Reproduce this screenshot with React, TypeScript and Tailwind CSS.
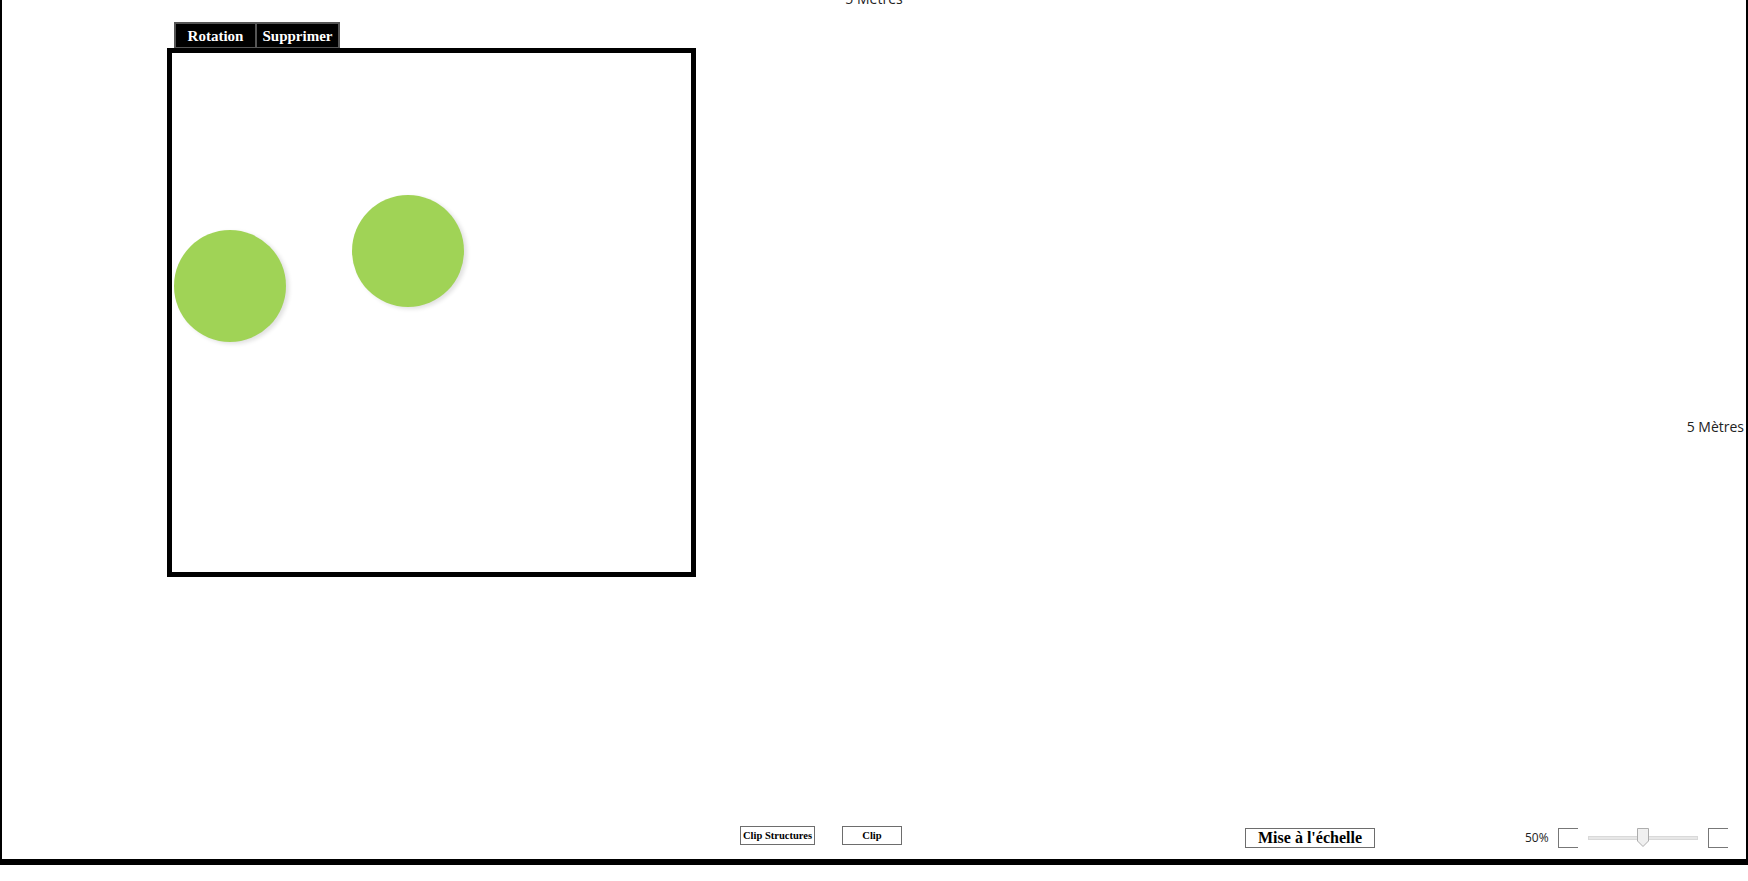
import React from "react";

const serif = { fontFamily: '"Liberation Serif", "Times New Roman", serif' };
const sans = { fontFamily: '"Open Sans", "Noto Sans", sans-serif' };

function Circle({ className }: { className: string }) {
  return (
    <div className={`absolute w-[116px] h-[116px] ${className}`}>
      <div className="w-[112px] h-[112px] rounded-full bg-[#a0d356] shadow-[3px_2px_4px_rgba(0,0,0,0.12)]" />
    </div>
  );
}

export default function App() {
  return (
    <div className="w-[1748px] h-[881px] bg-white overflow-hidden">
      <div className="relative w-[1748px] h-[865px] border-l-2 border-r-2 border-b-[6px] border-black flex flex-col">
        <div
          className="absolute left-1/2 -translate-x-1/2 top-[-11px] text-[14px] leading-[19px] text-[#222] whitespace-nowrap"
          style={sans}
        >
          5 Mètres
        </div>

        <div className="flex flex-row items-start flex-1">
          <div className="flex flex-col pl-[165px] pt-[22px]">
            <div className="flex flex-row ml-[7px]" style={serif}>
              <div className="w-[83px] h-[27px] bg-black border-2 border-[#555] text-white font-bold text-[15px] flex items-center justify-center pt-[2px]">
                Rotation
              </div>
              <div className="w-[83px] h-[27px] bg-black border-2 border-l-0 border-[#555] text-white font-bold text-[15px] flex items-center justify-center pt-[2px]">
                Supprimer
              </div>
            </div>
            <div className="relative -mt-px w-[529px] h-[529px] border-[5px] border-black bg-white">
              <Circle className="left-[2px] top-[177px]" />
              <Circle className="left-[180px] top-[142px]" />
            </div>
          </div>
          <div
            className="ml-auto mt-[417px] mr-[2px] text-[14px] leading-[19px] text-[#222] whitespace-nowrap"
            style={sans}
          >
            5 Mètres
          </div>
        </div>

        <div className="h-[40px] flex flex-row items-start">
          <div
            className="ml-[738px] mt-[7px] w-[75px] h-[19px] border border-[#6d6d6d] flex items-center justify-center font-bold text-[10.5px] text-black whitespace-nowrap"
            style={serif}
          >
            Clip Structures
          </div>
          <div
            className="ml-[27px] mt-[7px] w-[60px] h-[19px] border border-[#6d6d6d] flex items-center justify-center font-bold text-[10.5px] text-black"
            style={serif}
          >
            Clip
          </div>
          <div
            className="ml-[343px] mt-[9px] w-[130px] h-[20px] border border-[#6d6d6d] flex items-center justify-center font-bold text-[16px] text-black whitespace-nowrap"
            style={serif}
          >
            Mise à l'échelle
          </div>
          <div
            className="ml-[150px] mt-[10px] w-[23px] text-[12px] leading-[17px] text-[#222]"
            style={sans}
          >
            50%
          </div>
          <div className="ml-[10px] mt-[9px] w-[20px] h-[20px] border-l border-t border-b border-[#777]" />
          <div className="ml-[10px] mt-[9px] w-[110px] h-[20px] relative flex items-center">
            <div className="w-full h-[4px] bg-[#e7e7e7] border border-[#d9d9d9]" />
            <svg
              className="absolute left-[49px] top-0"
              width="12"
              height="19"
              viewBox="0 0 12 19"
            >
              <path
                d="M0.5 0.5 H11.5 V13 L6 18.5 L0.5 13 Z"
                fill="#f0f0f0"
                stroke="#adadad"
                strokeWidth="1"
              />
            </svg>
          </div>
          <div className="ml-[10px] mt-[9px] w-[20px] h-[20px] border-l border-t border-b border-[#777]" />
        </div>
      </div>
    </div>
  );
}
